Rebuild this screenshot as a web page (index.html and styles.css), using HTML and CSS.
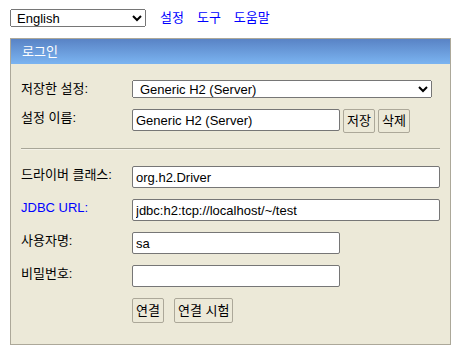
FILE: index.html
```html
<!DOCTYPE html>
<html lang="ko">
<head>
  <meta charset="UTF-8">
  <title>H2 Console</title>
  <link rel="stylesheet" href="styles.css">
</head>
<body>

  <form class="login-form" id="login">
    <!-- Language + top links -->
    <div class="top-bar">
      <select class="lang-select" name="language">
        <option selected>English</option>
        <option>한국어</option>
        <option>Deutsch</option>
        <option>Français</option>
      </select>
      <a href="#" class="top-link">설정</a>
      <a href="#" class="top-link">도구</a>
      <a href="#" class="top-link">도움말</a>
    </div>

    <!-- Login panel -->
    <div class="panel">
      <div class="panel-head">로그인</div>
      <div class="spacer"></div>

      <div class="row row-first">
        <div class="label">저장한 설정:</div>
        <div class="field">
          <select class="setting-select" name="setting">
            <option selected>Generic H2 (Server)</option>
            <option>Generic H2 (Embedded)</option>
          </select>
        </div>
      </div>

      <div class="row row-name">
        <div class="label">설정 이름:</div>
        <div class="field">
          <input type="text" class="text-short" name="name" value="Generic H2 (Server)">
          <button type="button" class="btn">저장</button>
          <button type="button" class="btn">삭제</button>
        </div>
      </div>

      <div class="row-line"><hr class="divider"></div>

      <div class="row">
        <div class="label">드라이버 클래스:</div>
        <div class="field"><input type="text" class="text-long" name="driver" value="org.h2.Driver"></div>
      </div>

      <div class="row">
        <div class="label"><a href="#" class="help-link">JDBC URL:</a></div>
        <div class="field"><input type="text" class="text-long" name="url" value="jdbc:h2:tcp://localhost/~/test"></div>
      </div>

      <div class="row">
        <div class="label">사용자명:</div>
        <div class="field"><input type="text" class="text-short" name="user" value="sa"></div>
      </div>

      <div class="row">
        <div class="label">비밀번호:</div>
        <div class="field"><input type="password" class="text-short" name="password" value=""></div>
      </div>

      <div class="row row-buttons">
        <div class="label"></div>
        <div class="field">
          <button type="submit" class="btn btn-big">연결</button>
          <button type="button" class="btn btn-big btn-test">연결 시험</button>
        </div>
      </div>
    </div>
  </form>

</body>
</html>
```

FILE: styles.css
```css
body {
  margin: 0;
  background-color: #fff;
  font: 13px/18px 'Liberation Sans', Arial, 'Noto Sans CJK KR', sans-serif;
  color: #000;
}

select,
input,
button {
  font: 13px/18px 'Liberation Sans', Arial, 'Noto Sans CJK KR', sans-serif;
  color: #000;
}

.login-form {
  padding: 9px 0 0 10px;
}

/* top bar */
.top-bar {
  display: flex;
  align-items: center;
  height: 18px;
}

.lang-select {
  width: 136px;
  height: 18px;
  padding: 0 0 0 2px;
  margin: 0;
}

.top-link {
  color: #0000ff;
  text-decoration: none;
  margin-left: 13px;
}

.top-link:first-of-type {
  margin-left: 14px;
}

/* login panel */
.panel {
  width: 439px;
  margin-top: 11px;
  background-color: #ece9d8;
  border: 1px solid #aca899;
}

.panel-head {
  height: 25px;
  line-height: 25px;
  padding: 0 11px;
  color: #fff;
  background: linear-gradient(#5983c5, #7bb4f1);
}

.spacer {
  height: 10px;
}

.row {
  display: flex;
  align-items: flex-start;
  gap: 20px;
  padding: 5px 10px 6px;
}

.row-first {
  padding: 6px 10px;
}

.row-name {
  padding: 5px 10px;
}

.row-buttons {
  padding: 5px 10px 21px;
}

.label {
  width: 91px;
  flex: none;
  white-space: nowrap;
}

.field {
  display: flex;
  align-items: flex-start;
  gap: 3px;
}

.help-link {
  color: #0000ff;
  text-decoration: none;
}

.row-line {
  padding: 5px 10px;
}

.divider {
  margin: 5px 0 6px;
  border: 0;
  border-top: 1px solid #a8a698;
  border-bottom: 1px solid #f4f2e8;
}

/* form controls */
.setting-select {
  width: 300px;
  height: 18px;
  padding: 0 0 0 3px;
  margin: 0;
}

input[type="text"],
input[type="password"] {
  box-sizing: border-box;
  height: 22px;
  margin: 0;
  padding: 0 3px;
  border: 1px solid #767676;
  border-radius: 2px;
  background: #fff;
}

.text-short {
  width: 208px;
  margin-right: 1px;
}

.text-long {
  width: 308px;
}

.btn {
  height: 24px;
  margin: 0;
  padding: 0 3px;
  background-color: #ece9d8;
  border: 1px solid #aca899;
  border-radius: 2px;
  cursor: pointer;
}

.btn-big {
  height: 25px;
}

.btn-test {
  margin-left: 7px;
}
```
